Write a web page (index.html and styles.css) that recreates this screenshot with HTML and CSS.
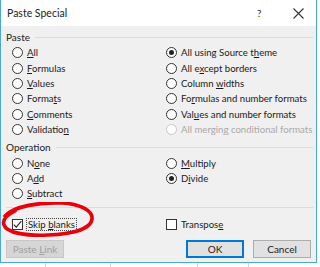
FILE: index.html
```html
<!DOCTYPE html>
<html lang="en">
<head>
  <meta charset="UTF-8" />
  <title>Paste Special</title>
  <link rel="stylesheet" href="styles.css">
</head>
<body>
  <div class="screen">
    <div class="dialog">
      <div class="titlebar">
        <span class="title">Paste Special</span>
        <span class="help">?</span>
        <svg class="close" width="11" height="11" viewBox="0 0 11 11"><path d="M0.5 0.5 L10.5 10.5 M10.5 0.5 L0.5 10.5" stroke="#333" stroke-width="1.1" fill="none"/></svg>
      </div>

      <div class="body">
        <!-- Paste -->
        <div class="group-head"><span>Paste</span><i class="rule"></i></div>
        <div class="options paste">
          <div class="opt"><span class="radio"></span><span><u>A</u>ll</span></div>
          <div class="opt"><span class="radio on"></span><span>All using Source t<u>h</u>eme</span></div>
          <div class="opt"><span class="radio"></span><span><u>F</u>ormulas</span></div>
          <div class="opt"><span class="radio"></span><span>All e<u>x</u>cept borders</span></div>
          <div class="opt"><span class="radio"></span><span><u>V</u>alues</span></div>
          <div class="opt"><span class="radio"></span><span>Column <u>w</u>idths</span></div>
          <div class="opt"><span class="radio"></span><span>Forma<u>t</u>s</span></div>
          <div class="opt"><span class="radio"></span><span>Fo<u>r</u>mulas and number formats</span></div>
          <div class="opt"><span class="radio"></span><span><u>C</u>omments</span></div>
          <div class="opt"><span class="radio"></span><span>Val<u>u</u>es and number formats</span></div>
          <div class="opt"><span class="radio"></span><span>Validatio<u>n</u></span></div>
          <div class="opt disabled"><span class="radio"></span><span>All mergin<u>g</u> conditional formats</span></div>
        </div>

        <!-- Operation -->
        <div class="group-head op"><span>Operation</span><i class="rule"></i></div>
        <div class="options">
          <div class="opt"><span class="radio"></span><span>N<u>o</u>ne</span></div>
          <div class="opt"><span class="radio"></span><span><u>M</u>ultiply</span></div>
          <div class="opt"><span class="radio"></span><span>A<u>d</u>d</span></div>
          <div class="opt"><span class="radio on"></span><span>D<u>i</u>vide</span></div>
          <div class="opt"><span class="radio"></span><span><u>S</u>ubtract</span></div>
        </div>

        <hr class="sep">

        <div class="options checks">
          <div class="opt">
            <span class="check"><svg width="9" height="9" viewBox="0 0 9 9"><path d="M0.8 4.6 L3.3 7.2 L8.3 1.2" stroke="#222" stroke-width="1.1" fill="none"/></svg></span>
            <span class="focus">Skip <u>b</u>lanks</span>
          </div>
          <div class="opt"><span class="check"></span><span>Transpos<u>e</u></span></div>
        </div>

        <div class="buttons">
          <button class="btn" disabled>Paste <u>L</u>ink</button>
          <span class="spacer"></span>
          <button class="btn default">OK</button>
          <button class="btn">Cancel</button>
        </div>
      </div>
    </div>
    <div class="sheet"></div>

    <svg class="scribble" width="100" height="40" viewBox="0 0 100 40">
      <path d="M5 14 C 14 4, 40 0, 62 1 C 81 2, 93 9, 92 17 C 91 27, 72 32, 48 33 C 26 34, 7 31, 4 23 C 2 18, 7 13, 15 9"
            stroke="#e8000a" stroke-width="3.6" fill="none" stroke-linecap="round"/>
    </svg>
  </div>
</body>
</html>
```

FILE: styles.css
```css
body {
  margin: 0;
  font-family: Lato, "Noto Sans", sans-serif;
  font-size: 9.6px;
  color: #1a1a1a;
  background: #fff;
}
.screen {
  position: relative;
  width: 320px;
  height: 267px;
  overflow: hidden;
  background: #fff;
}
.dialog {
  width: 315px;
  height: 262px;
  border: 1px solid #4aa8d4;
  border-top: none;
  background: #f0f0f0;
  display: flex;
  flex-direction: column;
}
.titlebar {
  height: 26px;
  background: #fff;
  display: flex;
  align-items: center;
  padding-left: 6px;
  font-size: 10.5px;
}
.title {
  flex: 1;
  color: #222;
}
.help {
  width: 10px;
  margin-right: 26px;
  color: #333;
  font-size: 10px;
}
.close {
  margin-right: 12px;
}
.body {
  padding: 4px 3px 0 5px;
}
.group-head {
  display: flex;
  align-items: center;
  height: 14px;
  color: #222;
  font-size: 10px;
}
.group-head .rule {
  flex: 1;
  height: 1px;
  background: #dcdcdc;
  margin-left: 5px;
}
.group-head.op {
  margin-top: 3px;
}
.options {
  display: grid;
  grid-template-columns: 154px 1fr;
  grid-auto-rows: 15.4px;
  margin-left: 6px;
  margin-top: 1px;
}
.opt {
  display: flex;
  align-items: center;
  gap: 4px;
  white-space: nowrap;
}
.opt.disabled {
  color: #a9a9a9;
}
.radio {
  width: 9px;
  height: 9px;
  border: 1px solid #333;
  border-radius: 50%;
  background: #fff;
  display: flex;
  align-items: center;
  justify-content: center;
  flex: none;
}
.radio.on::after {
  content: "";
  width: 5px;
  height: 5px;
  border-radius: 50%;
  background: #222;
}
.disabled .radio {
  border-color: #c6c6c6;
}
u {
  text-decoration-thickness: 1px;
  text-underline-offset: 1px;
}
.sep {
  border: none;
  height: 1px;
  background: #dcdcdc;
  margin: 5px 0 0 0;
}
.checks {
  margin-top: 9px;
  grid-auto-rows: 15px;
}
.check {
  width: 9px;
  height: 9px;
  border: 1px solid #333;
  background: #fff;
  display: flex;
  align-items: center;
  justify-content: center;
  flex: none;
}
.focus {
  outline: 1px dotted #444;
  padding: 0 1px;
}
.buttons {
  display: flex;
  gap: 9px;
  margin-top: 8px;
  margin-right: 2px;
}
.spacer {
  flex: 1;
}
.btn {
  width: 58px;
  height: 18px;
  padding: 0;
  font: inherit;
  font-size: 10px;
  color: #222;
  background: #e1e1e1;
  border: 1px solid #adadad;
}
.btn:disabled {
  color: #a0a0a0;
  background: #d6d6d6;
  border-color: #c8c8c8;
}
.btn.default {
  border: 1px solid #0078d7;
  box-shadow: inset 0 0 0 1px #0078d7;
}
.sheet {
  height: 4px;
  background:
    linear-gradient(#d4d4d4, #d4d4d4) 45px 0 / 1px 100% no-repeat,
    linear-gradient(#d4d4d4, #d4d4d4) 110px 0 / 1px 100% no-repeat,
    linear-gradient(#d4d4d4, #d4d4d4) 197px 0 / 1px 100% no-repeat,
    linear-gradient(#d4d4d4, #d4d4d4) 248px 0 / 1px 100% no-repeat,
    #fff;
}
.scribble {
  position: absolute;
  left: 0;
  top: 202px;
}
```
